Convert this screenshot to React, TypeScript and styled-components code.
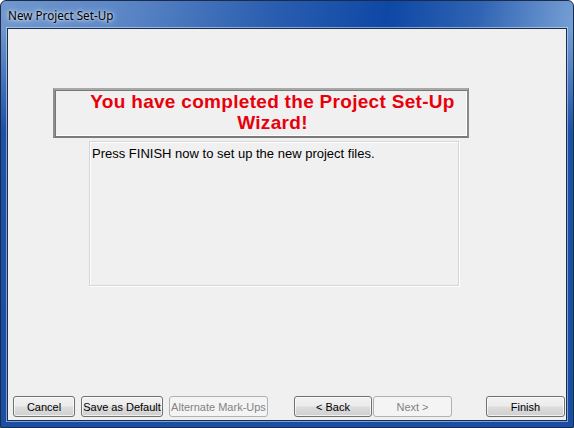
import React from 'react'
import styled, { createGlobalStyle } from 'styled-components'

const GlobalStyle = createGlobalStyle`
    html, body {
        margin: 0;
        padding: 0;
        background: #ffffff;
    }
    * {
        box-sizing: border-box;
    }
`

const Window = styled.div`
    width: 574px;
    height: 428px;
    display: flex;
    flex-direction: column;
    border: 1px solid #1c2c48;
    border-radius: 6px 6px 0 0;
    overflow: hidden;
    background:
        linear-gradient(180deg, rgba(28, 80, 166, 0) 28px, #1d51a7 130px, #1a4ea5 100%),
        linear-gradient(100deg, #7098cf 0%, #5a85c5 20%, #2b5eb0 42%, #0e48a5 60%, #2f63b3 74%, #7aa2d6 90%, #86acdc 100%);
`

const TitleBar = styled.div`
    height: 27px;
    flex: none;
    display: flex;
    align-items: center;
    padding: 1px 0 0 7px;
    font-family: "Noto Sans", "Liberation Sans", sans-serif;
    font-size: 11.7px;
    color: #000000;
    text-shadow: 0 0 6px rgba(255, 255, 255, 0.9), 0 0 3px rgba(255, 255, 255, 0.8);
`

const Client = styled.div`
    flex: 1;
    margin: 0 6px 6px;
    border: 1px solid #1b2d4e;
    box-shadow: 0 0 0 1px rgba(210, 228, 250, 0.55);
    background: #f0f0f0;
    display: flex;
    flex-direction: column;
    font-family: "Liberation Sans", Arial, sans-serif;
`

const Banner = styled.div`
    width: 416px;
    height: 50px;
    margin: 59px 0 0 45px;
    padding-top: 1px;
    border-style: solid;
    border-width: 2px;
    border-color: #a8a8a8 #8a8a8a #7a7a7a #8f8f8f;
    box-shadow: inset 1px 1px 0 #777777, inset -1px -1px 0 #ffffff;
    display: flex;
    flex-direction: column;
    align-items: center;
`

const BannerLine = styled.div`
    margin-left: 23px;
    color: #e8000b;
    font-size: 19px;
    font-weight: bold;
    letter-spacing: 0.3px;
    line-height: 21px;
    white-space: nowrap;
`

const Description = styled.div`
    width: 370px;
    height: 145px;
    margin: 3px 0 0 81px;
    padding: 4px 2px;
    border: 1px solid #d6d6d6;
    box-shadow: inset 1px 1px 0 #ffffff, 1px 1px 0 #ffffff;
    font-size: 13px;
    line-height: 15px;
    color: #000000;
`

const ButtonBar = styled.div`
    margin-top: auto;
    display: flex;
    align-items: center;
    padding: 0 0 3px 4px;
`

const Button = styled.button<{ $w: number; $gap: number }>`
    width: ${p => p.$w}px;
    height: 21px;
    margin-left: ${p => p.$gap}px;
    padding: 0;
    border: 1px solid #707070;
    border-radius: 3px;
    background: linear-gradient(180deg, #f2f2f2 0%, #ebebeb 48%, #dddddd 52%, #cfcfcf 100%);
    box-shadow: inset 0 0 0 1px rgba(255, 255, 255, 0.7);
    font-family: "Liberation Sans", Arial, sans-serif;
    font-size: 11px;
    color: #000000;
    &:disabled {
        border-color: #adb2b5;
        background: #f4f4f4;
        box-shadow: none;
        color: #838383;
    }
`

const App = () => {
    return (
        <>
            <GlobalStyle />
            <Window>
                <TitleBar>New Project Set-Up</TitleBar>
                <Client>
                    <Banner>
                        <BannerLine>You have completed the Project Set-Up</BannerLine>
                        <BannerLine>Wizard!</BannerLine>
                    </Banner>
                    <Description>Press FINISH now to set up the new project files.</Description>
                    <ButtonBar>
                        <Button $w={62} $gap={1}>Cancel</Button>
                        <Button $w={82} $gap={6}>Save as Default</Button>
                        <Button $w={99} $gap={6} disabled>Alternate Mark-Ups</Button>
                        <Button $w={78} $gap={26}>&lt; Back</Button>
                        <Button $w={79} $gap={1} disabled>Next &gt;</Button>
                        <Button $w={79} $gap={34}>Finish</Button>
                    </ButtonBar>
                </Client>
            </Window>
        </>
    )
}

export default App
